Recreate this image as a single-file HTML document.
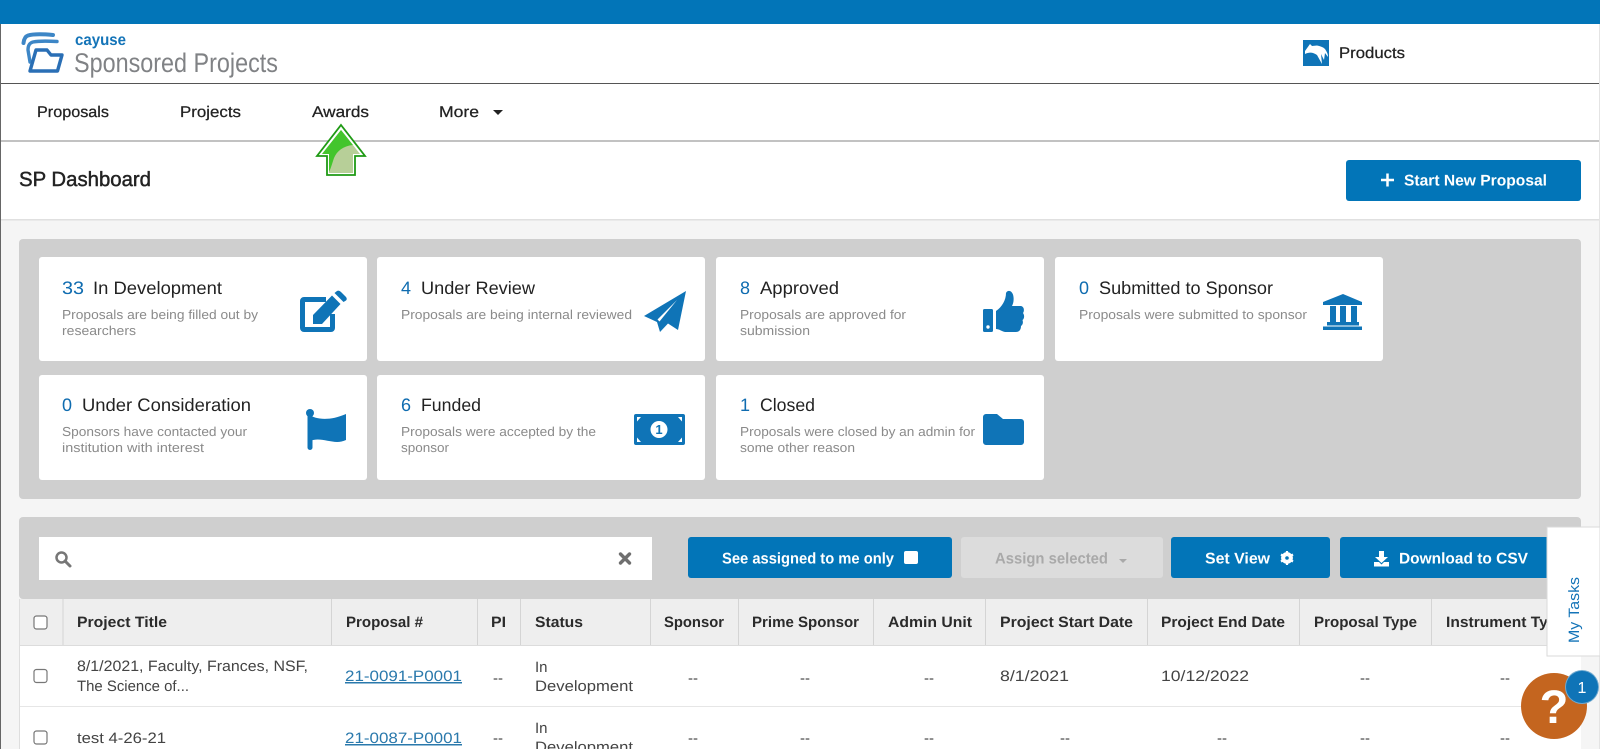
<!DOCTYPE html>
<html lang="en">
<head>
<meta charset="utf-8">
<title>SP Dashboard</title>
<style>
html,body{margin:0;padding:0;width:1600px;height:749px;overflow:hidden;background:#f5f5f5}
svg{display:block;font-family:"Liberation Sans",sans-serif}
text{text-rendering:geometricPrecision}
.n{font-size:15.5px;fill:#222;stroke:#222;stroke-width:.25px}
.t{font-size:18px;fill:#222}
.c{font-size:18px;fill:#0f6cb0}
.s{font-size:13px;fill:#8a8a8a}
.h{font-size:15px;font-weight:bold;fill:#2b2b2b}
.d{font-size:15px;fill:#444}
.m{font-size:15px;fill:#444;text-anchor:middle}
.l{font-size:15px;fill:#2a79ac;text-decoration:underline}
.b{font-size:15.5px;font-weight:bold;fill:#fff}
.i{fill:#0f74b7}
</style>
</head>
<body>
<svg width="1600" height="749" viewBox="0 0 1600 749" xmlns="http://www.w3.org/2000/svg">
<rect width="1600" height="749" fill="#f5f5f5"/>
<rect width="1600" height="219" fill="#fff"/>
<rect y="0" width="1600" height="24" fill="#0275b8"/>
<rect y="83" width="1600" height="1" fill="#555"/>
<rect y="140" width="1600" height="2" fill="#c2c2c2"/>
<rect y="219" width="1600" height="1.5" fill="#e0e0e0"/>
<rect x="0" y="24" width="1" height="725" fill="#666"/>
<rect x="1599" y="24" width="1" height="725" fill="#e4e4e4"/>

<!-- logo -->
<g fill="none" stroke-linejoin="round" stroke-linecap="round">
<path d="M53 35 C42 34 33 34 28 35.500 C25 36.500 24 39 23.500 43" stroke-width="4" stroke="#3d86c6"/>
<path d="M57 41.500 C48 41 38 41 33 42 C29 43 28 46 28 50 L30 62" stroke-width="3.400" stroke="#3d86c6"/>
<path d="M36 50 L47 50 L51 55 L62 55 L57.500 71 L30 71 Z" stroke-width="3.400" stroke="#2a6fb5"/>
</g>
<text x="75" y="45" font-size="16" font-weight="bold" fill="#1474b8" textLength="51" lengthAdjust="spacingAndGlyphs">cayuse</text>
<text x="74" y="72" font-size="27" fill="#808285" textLength="204" lengthAdjust="spacingAndGlyphs">Sponsored Projects</text>

<!-- products -->
<rect x="1303" y="40" width="26" height="26" fill="#0f74b7"/>
<path d="M1305 51 L1310 44 L1312 46 L1317 45.500 C1320 46 1323 47 1325 49 C1327 52 1328 54 1328 57 L1325 53 L1324 60 L1321 54 L1322 64 L1317 55 C1313 52 1309 52 1305 54 Z" fill="#fff"/>

<text x="1339" y="58" class="n" textLength="66" lengthAdjust="spacingAndGlyphs">Products</text>

<!-- nav -->
<text x="37" y="117" class="n" textLength="72" lengthAdjust="spacingAndGlyphs">Proposals</text>
<text x="180" y="117" class="n" textLength="61" lengthAdjust="spacingAndGlyphs">Projects</text>
<text x="312" y="117" class="n" textLength="57" lengthAdjust="spacingAndGlyphs">Awards</text>
<text x="439" y="117" class="n" textLength="40" lengthAdjust="spacingAndGlyphs">More</text>
<path d="M493 110 h10 l-5 5 Z" fill="#222"/>

<!-- arrow -->
<path d="M341 125 L365 156 L355 156 L355 175 L327 175 L327 156 L317 156 Z" fill="#fff" stroke="#1f9a14" stroke-width="1.800"/>
<path d="M341 130 L360 154 L353 154 L353 173 L329 173 L329 154 L322 154 Z" fill="#b7cf98"/>
<path d="M341 130 L353 145 C343 146 337 151 334 158 C332 164 331 168 329 172 L329 154 L322 154 Z" fill="#43c52c"/>

<!-- title bar -->
<text x="19" y="186" font-size="20.500" fill="#222" stroke="#222" stroke-width=".45" textLength="132" lengthAdjust="spacingAndGlyphs">SP Dashboard</text>
<rect x="1346" y="160" width="235" height="41" rx="3" fill="#0275b8"/>
<path d="M1381 180 h13 M1387.500 173.500 v13" stroke="#fff" stroke-width="2.500" fill="none"/>
<text x="1404" y="185.500" class="b" textLength="143" lengthAdjust="spacingAndGlyphs">Start New Proposal</text>

<!-- stats panel -->
<rect x="19" y="239" width="1562" height="260" rx="4" fill="#cfcfcf"/>
<g fill="#fff">
<rect x="39" y="257" width="328" height="104" rx="3"/>
<rect x="377" y="257" width="328" height="104" rx="3"/>
<rect x="716" y="257" width="328" height="104" rx="3"/>
<rect x="1055" y="257" width="328" height="104" rx="3"/>
<rect x="39" y="375" width="328" height="105" rx="3"/>
<rect x="377" y="375" width="328" height="105" rx="3"/>
<rect x="716" y="375" width="328" height="105" rx="3"/>
</g>

<text x="62" y="294" class="c" textLength="22" lengthAdjust="spacingAndGlyphs">33</text>
<text x="93" y="294" class="t" textLength="129" lengthAdjust="spacingAndGlyphs">In Development</text>
<text x="62" y="319" class="s" textLength="196" lengthAdjust="spacingAndGlyphs">Proposals are being filled out by</text>
<text x="62" y="335" class="s" textLength="74" lengthAdjust="spacingAndGlyphs">researchers</text>

<text x="401" y="294" class="c">4</text>
<text x="421" y="294" class="t" textLength="114" lengthAdjust="spacingAndGlyphs">Under Review</text>
<text x="401" y="319" class="s" textLength="231" lengthAdjust="spacingAndGlyphs">Proposals are being internal reviewed</text>

<text x="740" y="294" class="c">8</text>
<text x="760" y="294" class="t" textLength="79" lengthAdjust="spacingAndGlyphs">Approved</text>
<text x="740" y="319" class="s" textLength="166" lengthAdjust="spacingAndGlyphs">Proposals are approved for</text>
<text x="740" y="335" class="s" textLength="70" lengthAdjust="spacingAndGlyphs">submission</text>

<text x="1079" y="294" class="c">0</text>
<text x="1099" y="294" class="t" textLength="174" lengthAdjust="spacingAndGlyphs">Submitted to Sponsor</text>
<text x="1079" y="319" class="s" textLength="228" lengthAdjust="spacingAndGlyphs">Proposals were submitted to sponsor</text>

<text x="62" y="411" class="c">0</text>
<text x="82" y="411" class="t" textLength="169" lengthAdjust="spacingAndGlyphs">Under Consideration</text>
<text x="62" y="436" class="s" textLength="185" lengthAdjust="spacingAndGlyphs">Sponsors have contacted your</text>
<text x="62" y="452" class="s" textLength="142" lengthAdjust="spacingAndGlyphs">institution with interest</text>

<text x="401" y="411" class="c">6</text>
<text x="421" y="411" class="t" textLength="60" lengthAdjust="spacingAndGlyphs">Funded</text>
<text x="401" y="436" class="s" textLength="195" lengthAdjust="spacingAndGlyphs">Proposals were accepted by the</text>
<text x="401" y="452" class="s" textLength="48" lengthAdjust="spacingAndGlyphs">sponsor</text>

<text x="740" y="411" class="c">1</text>
<text x="760" y="411" class="t" textLength="55" lengthAdjust="spacingAndGlyphs">Closed</text>
<text x="740" y="436" class="s" textLength="235" lengthAdjust="spacingAndGlyphs">Proposals were closed by an admin for</text>
<text x="740" y="452" class="s" textLength="115" lengthAdjust="spacingAndGlyphs">some other reason</text>

<!-- edit icon -->
<path d="M326 299.500 H304 a1.500 1.500 0 0 0 -1.500 1.500 V328 a1.500 1.500 0 0 0 1.500 1.500 H331 a1.500 1.500 0 0 0 1.500 -1.500 V314" fill="none" stroke="#0f74b7" stroke-width="5"/>
<path d="M313 324 L313 315 L332 295.500 L340.500 304 L322 324 Z" class="i"/>
<path d="M334.500 293 L337 291 Q339 290 341 292 L346 297 Q347.500 299 346 300.500 L343.500 302 Z" class="i"/>
<!-- plane -->
<path d="M686 291 L644 316 L657 322 L660 332 L668 323.500 L678 330 Z" class="i"/>
<path d="M677 300 L657.500 319.500 L659.500 321.500 Z" fill="#fff"/>
<!-- thumb -->
<rect x="983" y="309" width="10" height="23" rx="1.500" class="i"/>
<circle cx="988" cy="327" r="1.700" fill="#fff"/>
<path d="M996 311 C1002 307 1006 300 1006 293 C1008 289 1013 291 1013.500 297 C1014 301 1013 304 1012 306 L1021 306 C1025 307 1024 312 1023 313 C1025 316 1024 319 1022.500 320 C1023.500 323 1022.500 325 1021 326 C1021 330 1019 332 1016 332 L1005 332 C1001 331 999 329 996 329 Z" class="i"/>
<!-- bank -->
<path d="M1343 294 L1362 302 V305 H1323 V302 Z" class="i"/>
<path d="M1330 306 h6 v17 h-6 Z M1340 306 h6 v17 h-6 Z M1351 306 h6 v17 h-6 Z M1327 322 h32 v3.500 h-32 Z M1323 326.500 h39 v3.500 h-39 Z" class="i"/>
<!-- flag -->
<circle cx="310" cy="413" r="4" class="i"/>
<rect x="307.500" y="413" width="5" height="37" rx="2.500" class="i"/>
<path d="M308 414 C316 420 330 421 346 414 V440 C334 446 322 436 310 441 Z" class="i"/>
<!-- money -->
<rect x="634" y="414" width="51" height="31" rx="2" class="i"/>
<circle cx="659" cy="429.500" r="8.500" fill="#fff"/>
<text x="659" y="434" font-size="13" font-weight="bold" fill="#0f74b7" text-anchor="middle">1</text>
<path d="M637 417 h4 l-4 4.500 Z M682 417 h-4 l4 4.500 Z M637 442 h4 l-4 -4.500 Z M682 442 h-4 l4 -4.500 Z" fill="#fff"/>
<!-- folder -->
<path d="M983 417 a3 3 0 0 1 3 -3 H997 L1003 419 H1021 a3 3 0 0 1 3 3 V442 a3 3 0 0 1 -3 3 H986 a3 3 0 0 1 -3 -3 Z" class="i"/>

<!-- toolbar -->
<rect x="19" y="517" width="1562" height="82" rx="4" fill="#cfcfcf"/>
<rect x="39" y="537" width="613" height="43" fill="#fff"/>
<circle cx="61.500" cy="557.500" r="5" fill="none" stroke="#777" stroke-width="2.500"/>
<path d="M65 561 L70 566" stroke="#777" stroke-width="3" stroke-linecap="round"/>
<path d="M620.500 554 L629.500 563 M629.500 554 L620.500 563" stroke="#6f6f6f" stroke-width="3.400" stroke-linecap="round"/>

<rect x="688" y="537" width="264" height="41" rx="3" fill="#0275b8"/>
<text x="722" y="563.500" class="b" textLength="172" lengthAdjust="spacingAndGlyphs">See assigned to me only</text>
<rect x="904" y="551" width="14" height="13" rx="2" fill="#fff"/>

<rect x="961" y="537" width="202" height="41" rx="3" fill="#dcdcdc"/>
<text x="995" y="563.500" class="b" style="fill:#a9a9a9" textLength="113" lengthAdjust="spacingAndGlyphs">Assign selected</text>
<path d="M1119 559 h8 l-4 4 Z" fill="#a9a9a9"/>

<rect x="1171" y="537" width="159" height="41" rx="3" fill="#0275b8"/>
<text x="1205" y="563.500" class="b" textLength="65" lengthAdjust="spacingAndGlyphs">Set View</text>
<circle cx="1287" cy="558" r="4.200" fill="none" stroke="#fff" stroke-width="3.400"/>
<path d="M1287 551 v14 M1281 554.500 l12 7 M1293 554.500 l-12 7" stroke="#fff" stroke-width="2.200"/>
<circle cx="1287" cy="558" r="1.800" fill="#0275b8"/>

<rect x="1340" y="537" width="241" height="41" rx="3" fill="#0275b8"/>
<path d="M1379 551 h5 v6 h4 l-6.500 6 l-6.500 -6 h4 Z" fill="#fff"/>
<path d="M1374 562 h5 l2.500 2.500 l2.500 -2.500 h5 v4.500 h-15 Z" fill="#fff"/>
<text x="1399" y="563.500" class="b" textLength="129" lengthAdjust="spacingAndGlyphs">Download to CSV</text>

<!-- table -->
<rect x="19" y="599" width="1562" height="150" fill="#fff"/>
<rect x="19" y="599" width="1562" height="46" fill="#eeeeee"/>
<rect x="19" y="645" width="1562" height="1" fill="#dcdcdc"/>
<rect x="19" y="706" width="1562" height="1" fill="#e6e6e6"/>
<rect x="19" y="599" width="1" height="150" fill="#dedede"/>
<g fill="#d4d4d4">
<rect x="62.500" y="599" width="1" height="46"/>
<rect x="331" y="599" width="1" height="46"/>
<rect x="477" y="599" width="1" height="46"/>
<rect x="520" y="599" width="1" height="46"/>
<rect x="650" y="599" width="1" height="46"/>
<rect x="738" y="599" width="1" height="46"/>
<rect x="873" y="599" width="1" height="46"/>
<rect x="985" y="599" width="1" height="46"/>
<rect x="1147" y="599" width="1" height="46"/>
<rect x="1299" y="599" width="1" height="46"/>
<rect x="1431" y="599" width="1" height="46"/>
</g>
<g fill="#fff" stroke="#777" stroke-width="1.200">
<rect x="34" y="616" width="13" height="13" rx="2.500"/>
<rect x="34" y="669.500" width="13" height="13" rx="2.500"/>
<rect x="34" y="731" width="13" height="13" rx="2.500"/>
</g>
<text x="77" y="627" class="h" textLength="90" lengthAdjust="spacingAndGlyphs">Project Title</text>
<text x="346" y="627" class="h" textLength="77" lengthAdjust="spacingAndGlyphs">Proposal #</text>
<text x="491" y="627" class="h" textLength="15" lengthAdjust="spacingAndGlyphs">PI</text>
<text x="535" y="627" class="h" textLength="48" lengthAdjust="spacingAndGlyphs">Status</text>
<text x="664" y="627" class="h" textLength="60" lengthAdjust="spacingAndGlyphs">Sponsor</text>
<text x="752" y="627" class="h" textLength="107" lengthAdjust="spacingAndGlyphs">Prime Sponsor</text>
<text x="888" y="627" class="h" textLength="84" lengthAdjust="spacingAndGlyphs">Admin Unit</text>
<text x="1000" y="627" class="h" textLength="133" lengthAdjust="spacingAndGlyphs">Project Start Date</text>
<text x="1161" y="627" class="h" textLength="124" lengthAdjust="spacingAndGlyphs">Project End Date</text>
<text x="1314" y="627" class="h" textLength="103" lengthAdjust="spacingAndGlyphs">Proposal Type</text>
<text x="1446" y="627" class="h" textLength="120" lengthAdjust="spacingAndGlyphs">Instrument Type</text>

<text x="77" y="671" class="d" textLength="231" lengthAdjust="spacingAndGlyphs">8/1/2021, Faculty, Frances, NSF,</text>
<text x="77" y="691" class="d" textLength="112" lengthAdjust="spacingAndGlyphs">The Science of...</text>
<text x="345" y="681" class="l" textLength="117" lengthAdjust="spacingAndGlyphs">21-0091-P0001</text>
<text x="498" y="683" class="m">--</text>
<text x="535" y="672" class="d">In</text>
<text x="535" y="691" class="d" textLength="98" lengthAdjust="spacingAndGlyphs">Development</text>
<text x="693" y="683" class="m">--</text>
<text x="805" y="683" class="m">--</text>
<text x="929" y="683" class="m">--</text>
<text x="1000" y="681" class="d" textLength="69" lengthAdjust="spacingAndGlyphs">8/1/2021</text>
<text x="1161" y="681" class="d" textLength="88" lengthAdjust="spacingAndGlyphs">10/12/2022</text>
<text x="1365" y="683" class="m">--</text>
<text x="1505" y="683" class="m">--</text>

<text x="77" y="743" class="d" textLength="89" lengthAdjust="spacingAndGlyphs">test 4-26-21</text>
<text x="345" y="743" class="l" textLength="117" lengthAdjust="spacingAndGlyphs">21-0087-P0001</text>
<text x="498" y="743" class="m">--</text>
<text x="535" y="733" class="d">In</text>
<text x="535" y="752" class="d" textLength="98" lengthAdjust="spacingAndGlyphs">Development</text>
<text x="693" y="743" class="m">--</text>
<text x="805" y="743" class="m">--</text>
<text x="929" y="743" class="m">--</text>
<text x="1065" y="743" class="m">--</text>
<text x="1222" y="743" class="m">--</text>
<text x="1365" y="743" class="m">--</text>
<text x="1505" y="743" class="m">--</text>

<!-- my tasks -->
<rect x="1547" y="527" width="53" height="129" fill="#fff" stroke="#dadada" stroke-width="1"/>
<text transform="translate(1579,643) rotate(-90)" font-size="15" fill="#1474b8" textLength="66" lengthAdjust="spacingAndGlyphs">My Tasks</text>

<!-- help -->
<circle cx="1554" cy="706" r="33" fill="#c4651f"/>
<text x="1554" y="723" font-size="47" font-weight="bold" fill="#fff" text-anchor="middle">?</text>
<circle cx="1582" cy="687" r="17" fill="#6fa9cf"/>
<circle cx="1582" cy="687" r="16" fill="#0f74b7"/>
<text x="1582" y="693" font-size="16" fill="#fff" text-anchor="middle">1</text>
</svg>
</body>
</html>
